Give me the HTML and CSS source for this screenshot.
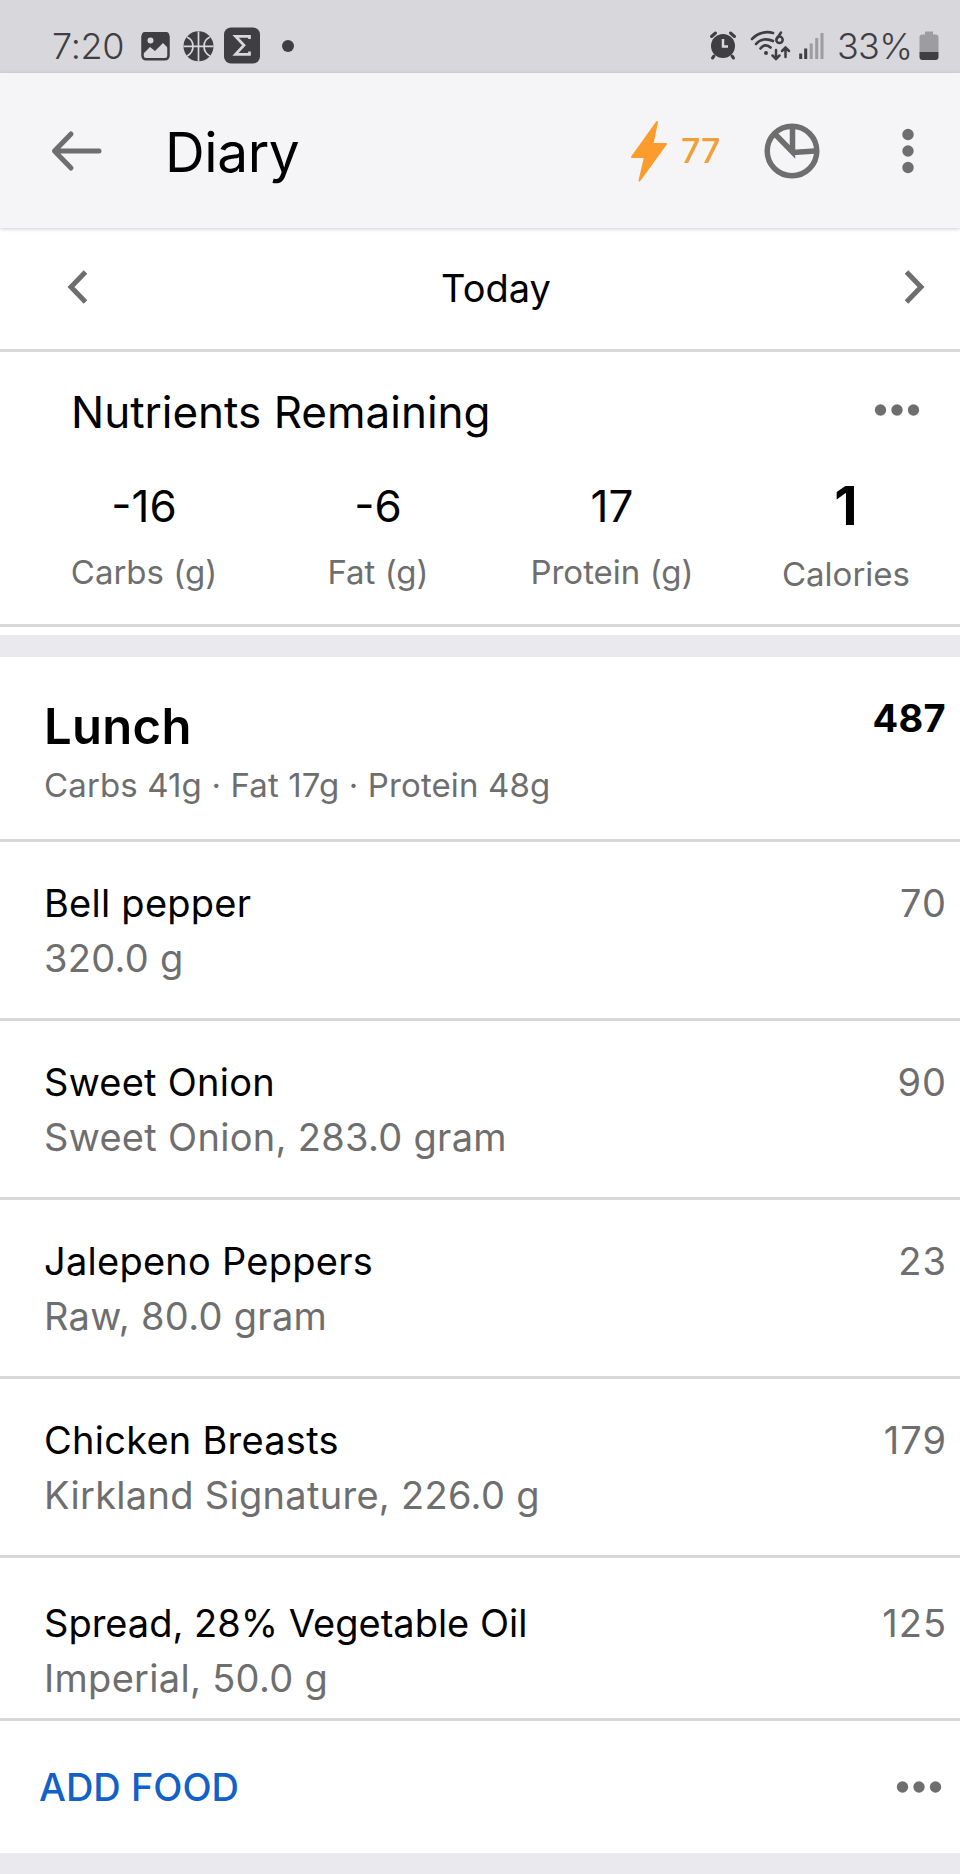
FILE: index.html
```html
<!DOCTYPE html>
<html lang="en">
<head>
    <meta charset="UTF-8">
    <meta name="viewport" content="width=device-width, initial-scale=1.0">
    <title>Diary</title>
    <link rel="stylesheet" href="styles.css">
</head>
<body>
    <!-- Status bar -->
    <div class="status-bar">
        <span class="clock">7:20</span>
        <svg class="status-left" width="156" height="40" viewBox="0 0 156 40">
            <rect x="2.500" y="6.300" width="26" height="26" rx="3.500" fill="none" stroke="#3f3e43" stroke-width="2.500"/>
            <path fill="#3f3e43" fill-rule="evenodd" d="M2 8a3 3 0 0 1 3-3h21a3 3 0 0 1 3 3v14l-6-6-8 8-5-4-7 7zM10.500 10.500a3 3 0 1 0 0 6 3 3 0 0 0 0-6z"/>
            <circle cx="58.500" cy="19.300" r="15" fill="#3f3e43"/>
            <path d="M43.500 19.300h30M58.500 4.500v30M47 10c8 3.500 8 15 0 19M70 10c-8 3.500-8 15 0 19" fill="none" stroke="#d8d7dc" stroke-width="1.700"/>
            <rect x="84" y="0.500" width="36" height="36" rx="7" fill="#3f3e43"/>
            <path d="M109.500 12V9.300H95.500l8.500 9-8.500 9h14V24.500" fill="none" stroke="#d8d7dc" stroke-width="2.700"/>
            <circle cx="148" cy="19" r="6" fill="#3f3e43"/>
        </svg>
        <div class="spacer"></div>
        <svg class="status-right" width="116" height="32" viewBox="0 0 116 32">
            <g fill="none" stroke="#3f3e43" stroke-linecap="round">
                <circle cx="14" cy="16" r="12" fill="#3f3e43" stroke="none"/>
                <path d="M2.500 6.500l4-3.500M25.500 6.500l-4-3.500M5 26l-1.500 2M23 26l1.500 2" stroke-width="3"/>
                <path d="M14 9v7.500h5" stroke="#d8d7dc" stroke-width="2.500" stroke-linecap="butt"/>
                <path d="M43 9c5-6 14-8 21-6M47 14c4-5 11-6 17-3M51.500 18.500c3-4 7-4 10-1" stroke-width="2.700"/>
                <circle cx="57" cy="23" r="2" fill="#3f3e43" stroke="none"/>
                <path d="M72 2.500l-4 6" stroke-width="2.500"/>
                <circle cx="70.500" cy="9.800" r="3.200" stroke-width="2.500"/>
                <path d="M67 20v9M63.500 25.500l3.500 3.500 3.500-3.500M76.500 27v-9M73 21l3.500-3.500 3.500 3.500" stroke-width="2.500"/>
            </g>
            <path d="M91.700 29v-5.500M96.700 29v-10.500" stroke="#3f3e43" stroke-width="3"/>
            <path d="M102.200 29V13.500M107.700 29V8M113 29V3" stroke="#9d9ca1" stroke-width="3"/>
        </svg>
        <span class="battery-level">33%</span>
        <svg class="battery" width="20" height="30" viewBox="0 0 20 30">
            <path fill="#9d9ca1" d="M6 .500h8v3h2.500a3 3 0 0 1 3 3v15H.500V6.500a3 3 0 0 1 3-3H6z"/>
            <path fill="#3f3e43" d="M.500 21h19v5a3 3 0 0 1-3 3h-13a3 3 0 0 1-3-3z"/>
        </svg>
    </div>

    <!-- App bar -->
    <header class="app-bar">
        <svg class="back" width="52" height="42" viewBox="0 0 52 42">
            <path d="M48 21H4M20 4L3.500 21 20 38" fill="none" stroke="#6e6e6f" stroke-width="5" stroke-linecap="round" stroke-linejoin="round"/>
        </svg>
        <h1>Diary</h1>
        <div class="spacer"></div>
        <svg class="bolt" width="38" height="64" viewBox="0 0 38 64">
            <path d="M27 3L2 38h13L9.500 61.500 36 25H22.500z" fill="#fc9c2d" stroke="#fc9c2d" stroke-width="2" stroke-linejoin="round"/>
        </svg>
        <span class="streak">77</span>
        <svg class="chart" width="56" height="56" viewBox="0 0 56 56">
            <path d="M28.500 4v25L11 11M28.500 29.500L51 28" fill="none" stroke="#6e6e6f" stroke-width="5.500"/>
            <circle cx="28" cy="28" r="24.800" fill="none" stroke="#6e6e6f" stroke-width="5.500"/>
        </svg>
        <svg class="menu" width="12" height="46" viewBox="0 0 12 46" fill="#6e6e6f">
            <circle cx="6" cy="6.500" r="5.700"/><circle cx="6" cy="23" r="5.700"/><circle cx="6" cy="39.500" r="5.700"/>
        </svg>
    </header>

    <!-- Date picker -->
    <div class="date-row">
        <svg width="22" height="34" viewBox="0 0 22 34">
            <path d="M18.500 2L4 17l14.500 15" fill="none" stroke="#6e6e6f" stroke-width="5"/>
        </svg>
        <span>Today</span>
        <svg width="22" height="34" viewBox="0 0 22 34">
            <path d="M3.500 2L18 17 3.500 32" fill="none" stroke="#6e6e6f" stroke-width="5"/>
        </svg>
    </div>

    <!-- Nutrients remaining -->
    <section class="nutrients">
        <div class="nutrients-header">
            <h2>Nutrients Remaining</h2>
            <svg width="46" height="12" viewBox="0 0 46 12" fill="#6e6e6f">
                <circle cx="6.500" cy="6" r="5.700"/><circle cx="23" cy="6" r="5.700"/><circle cx="39.500" cy="6" r="5.700"/>
            </svg>
        </div>
        <div class="nutrient-grid">
            <div class="nutrient"><span class="value">-16</span><span class="label">Carbs (g)</span></div>
            <div class="nutrient"><span class="value">-6</span><span class="label">Fat (g)</span></div>
            <div class="nutrient"><span class="value">17</span><span class="label">Protein (g)</span></div>
            <div class="nutrient calories"><span class="value">1</span><span class="label">Calories</span></div>
        </div>
    </section>
    <div class="divider"></div>

    <!-- Lunch -->
    <section class="meal">
        <div class="meal-header">
            <div>
                <h2>Lunch</h2>
                <p>Carbs 41g · Fat 17g · Protein 48g</p>
            </div>
            <span class="total">487</span>
        </div>
        <div class="food">
            <div><h3>Bell pepper</h3><p>320.0 g</p></div>
            <span class="kcal">70</span>
        </div>
        <div class="food">
            <div><h3>Sweet Onion</h3><p>Sweet Onion, 283.0 gram</p></div>
            <span class="kcal">90</span>
        </div>
        <div class="food">
            <div><h3>Jalepeno Peppers</h3><p>Raw, 80.0 gram</p></div>
            <span class="kcal">23</span>
        </div>
        <div class="food">
            <div><h3>Chicken Breasts</h3><p>Kirkland Signature, 226.0 g</p></div>
            <span class="kcal">179</span>
        </div>
        <div class="food last">
            <div><h3>Spread, 28% Vegetable Oil</h3><p>Imperial, 50.0 g</p></div>
            <span class="kcal">125</span>
        </div>
        <div class="meal-footer">
            <a class="add-food">ADD FOOD</a>
            <svg width="46" height="12" viewBox="0 0 46 12" fill="#6e6e6f">
                <circle cx="6.500" cy="6" r="5.700"/><circle cx="23" cy="6" r="5.700"/><circle cx="39.500" cy="6" r="5.700"/>
            </svg>
        </div>
    </section>
</body>
</html>
```

FILE: styles.css
```css
* {
    box-sizing: border-box;
}
body {
    margin: 0;
    height: 1874px;
    overflow: hidden;
    background: #eae9ed;
    color: #000;
    font-family: Inter, Roboto, sans-serif;
}
h1, h2, h3, p {
    margin: 0;
    font-weight: 400;
    white-space: nowrap;
}
svg {
    display: block;
    flex: none;
}
.spacer {
    flex: 1;
}

/* Status bar */
.status-bar {
    display: flex;
    align-items: flex-start;
    height: 73px;
    padding: 0 21px 0 52px;
    background: #d8d7dc;
    color: #3f3e43;
    font-size: 36px;
    font-weight: 300;
    line-height: 40px;
}
.clock {
    width: 88px;
    padding-top: 26px;
    letter-spacing: -0.3px;
}
.status-left {
    margin-top: 27px;
}
.status-right {
    margin-top: 30px;
}
.battery-level {
    width: 94px;
    padding: 26px 0 0 12px;
    letter-spacing: -0.7px;
}
.battery {
    margin-top: 31px;
}

/* App bar */
.app-bar {
    display: flex;
    align-items: center;
    position: relative;
    height: 155px;
    padding: 0 46px 0 51px;
    background: #f5f5f7;
    box-shadow: 0 1px 4px rgba(0, 0, 0, 0.2);
}
.app-bar h1 {
    margin-left: 62px;
    padding-top: 2px;
    font-size: 55px;
    line-height: 66px;
    letter-spacing: -0.4px;
}
.streak {
    width: 50px;
    margin-left: 13px;
    color: #efa03a;
    font-size: 34px;
    font-weight: 500;
}
.chart {
    margin-left: 33px;
}
.menu {
    margin-left: 82px;
}

/* Date picker */
.date-row {
    display: flex;
    align-items: center;
    justify-content: space-between;
    height: 124px;
    padding: 0 35px 3px 67px;
    border-bottom: 3px solid #d8d8d8;
    background: #fff;
    font-size: 38px;
}
.date-row span {
    padding-top: 2px;
}

/* Nutrients */
.nutrients {
    height: 275px;
    padding-top: 36px;
    border-bottom: 3px solid #d8d8d8;
    background: #fff;
}
.nutrients-header {
    display: flex;
    align-items: center;
    justify-content: space-between;
    height: 48px;
    padding: 0 40px 0 71px;
}
.nutrients-header h2 {
    font-size: 44px;
}
.nutrients-header svg {
    margin-bottom: 4px;
}
.nutrient-grid {
    display: grid;
    grid-template-columns: repeat(4, 234px);
    padding: 44px 0 0 27px;
}
.nutrient {
    display: flex;
    flex-direction: column;
    align-items: center;
    gap: 20px;
}
.value {
    font-size: 44px;
    line-height: 52px;
}
.label {
    color: #6e6e6f;
    font-size: 33px;
    line-height: 40px;
}
.calories .value {
    font-size: 54px;
    font-weight: 700;
}
.calories .label {
    padding-top: 2px;
}
.divider {
    height: 30px;
    border-top: 8px solid #fff;
    background: #eae9ed;
}

/* Meal */
.meal {
    background: #fff;
}
.meal-header, .food {
    display: flex;
    justify-content: space-between;
    padding: 0 14px 0 44px;
    border-bottom: 3px solid #d8d8d8;
}
.meal-header {
    height: 185px;
    padding-top: 40px;
}
.meal-header h2 {
    font-size: 49px;
    font-weight: 600;
    line-height: 60px;
    letter-spacing: 0.3px;
}
.meal-header p {
    margin-top: 8px;
    color: #6e6e6f;
    font-size: 33px;
    line-height: 40px;
    letter-spacing: 0.13px;
}
.total {
    margin-top: 1px;
    font-size: 38px;
    font-weight: 700;
    line-height: 40px;
    letter-spacing: 0.3px;
}
.food {
    height: 179px;
    padding-top: 41px;
    font-size: 38px;
    line-height: 40px;
}
.food h3 {
    font-size: 38px;
    letter-spacing: 0.25px;
}
.food p {
    margin-top: 15px;
    letter-spacing: 0.3px;
}
.food p, .kcal {
    color: #6e6e6f;
}
.kcal {
    margin-right: -1px;
    letter-spacing: 1px;
}
.last {
    height: 163px;
    padding-top: 45px;
}
.last h3 {
    letter-spacing: 0;
}
.meal-footer {
    display: flex;
    align-items: center;
    justify-content: space-between;
    height: 132px;
    padding: 0 18px 0 39px;
}
.add-food {
    color: #1161c9;
    font-size: 38px;
    font-weight: 500;
}
```
